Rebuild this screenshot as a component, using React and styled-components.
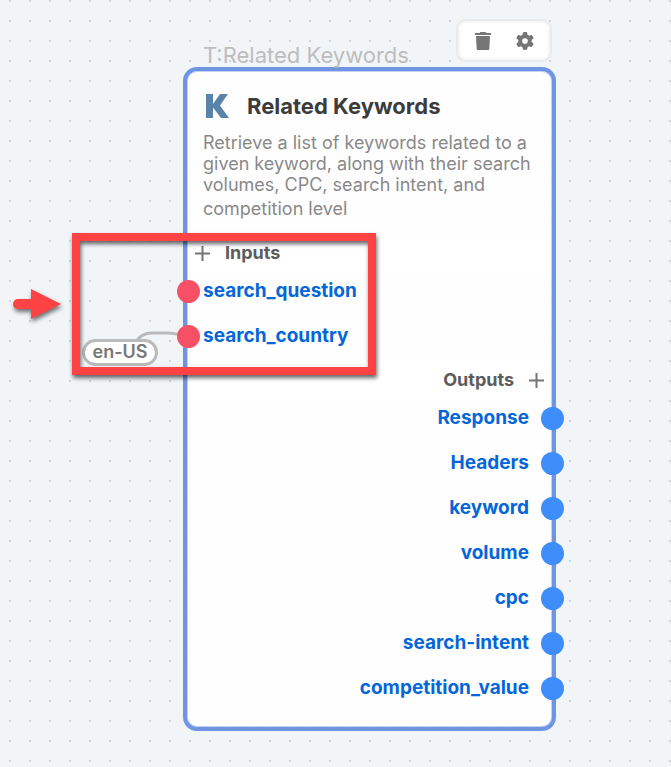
import React from 'react';
import styled, { createGlobalStyle } from 'styled-components';
import { FaGear } from 'react-icons/fa6';

const GlobalStyle = createGlobalStyle`
  *, *::before, *::after { box-sizing: border-box; }
  body { margin: 0; font-family: Inter, "Liberation Sans", sans-serif; }
  h2, h3, p, ul { margin: 0; padding: 0; }
  button { border: 0; padding: 0; background: none; cursor: pointer; font: inherit; }
`;

const Canvas = styled.main`
  position: relative;
  min-height: 100vh;
  overflow: hidden;
  background: #f1f5f8 conic-gradient(from 90deg at 18px 18px, #cbd5e0 90deg, transparent 0) -9px 2px / 20px 20px;
`;

const NodeWrap = styled.div`
  position: absolute;
  left: 183px;
  top: 19px;
  width: 373px;
`;

const NodeTop = styled.div`
  display: flex;
  height: 48px;
  padding: 0 4px 0 20px;
  justify-content: space-between;
  align-items: flex-start;
`;

const NodeTag = styled.span`
  align-self: flex-end;
  font-size: 22px;
  line-height: 24px;
  color: #bdbdbd;
  white-space: nowrap;
`;

const Toolbar = styled.div`
  display: flex;
  width: 96px;
  height: 43px;
  padding: 0 14px;
  justify-content: space-between;
  align-items: center;
  border: 2px solid #e9e9e9;
  border-radius: 10px;
  background: #fff;
  box-shadow: inset 0 0 4px #e8e8e8;
`;

const ToolButton = styled.button`
  display: grid;
  width: 22px;
  height: 24px;
  place-items: center;
  color: #757575;
`;

const Card = styled.article`
  border: 4px solid #6f94e3;
  border-radius: 14px;
  background: rgba(255, 255, 255, 0.9);
  box-shadow: inset 0 0 0 1px #c3d1f3;
  padding-bottom: 19px;
`;

const Header = styled.header`
  display: flex;
  align-items: center;
  gap: 18px;
  height: 61px;
  padding: 9px 16px 0 19px;
`;

const Title = styled.h2`
  font-size: 22px;
  font-weight: 700;
  line-height: 28px;
  color: #3c3c3c;
`;

const Description = styled.p`
  height: 102px;
  padding: 0 16px;
  font-size: 18px;
  line-height: 21px;
  color: #898989;

  &::after {
    content: "";
    display: inline-block;
    height: 20px;
  }
`;

const Section = styled.section`
  & + & {
    margin-top: 5px;
  }
`;

const SectionHeader = styled.div`
  display: flex;
  flex-direction: ${({ $side }) => ($side === 'right' ? 'row-reverse' : 'row')};
  align-items: center;
  gap: 15px;
  height: 38px;
  margin: 0 1px;
  padding: 0 7px;
  background: #fff;
`;

const SectionTitle = styled.h3`
  font-size: 18px;
  font-weight: 700;
  line-height: 22px;
  color: #5c5c5c;
`;

const AddButton = styled.button`
  display: grid;
  width: 15px;
  height: 15px;
  place-items: center;
`;

const PortList = styled.ul`
  display: grid;
  gap: 6px;
  list-style: none;
`;

const PortRow = styled.li`
  display: flex;
  flex-direction: ${({ $side }) => ($side === 'right' ? 'row-reverse' : 'row')};
  align-items: center;
  gap: ${({ $side }) => ($side === 'right' ? '12px' : '3px')};
  height: 39px;
  margin: ${({ $side }) => ($side === 'right' ? '0 -12px 0 0' : '0 0 0 -10px')};
`;

const PortDot = styled.span`
  width: 23px;
  height: 23px;
  border-radius: 50%;
  background: ${({ $side }) => ($side === 'right' ? '#3f8cfb' : '#f55066')};
`;

const PortName = styled.span`
  padding-bottom: 1px;
  font-size: 19px;
  font-weight: 700;
  line-height: 24px;
  color: #0566d9;
`;

const Wire = styled.svg`
  position: absolute;
  left: 132px;
  top: 328px;
`;

const ValuePill = styled.span`
  position: absolute;
  left: 82px;
  top: 339px;
  width: 76px;
  height: 27px;
  border: 3px solid #bababa;
  border-radius: 14px;
  background: #fff;
  font-size: 18px;
  font-weight: 600;
  line-height: 20px;
  text-align: center;
  color: #777;
`;

const Highlight = styled.div`
  position: absolute;
  left: 72px;
  top: 233px;
  width: 304px;
  height: 142px;
  border: 8px solid #ff4344;
  filter: drop-shadow(1px 3px 2px rgba(0, 0, 0, 0.6));
  pointer-events: none;
`;

const Arrow = styled.svg`
  position: absolute;
  left: 8px;
  top: 284px;
  filter: drop-shadow(1px 3px 2px rgba(0, 0, 0, 0.55));
`;

const inputs = ['search_question', 'search_country'];
const outputs = ['Response', 'Headers', 'keyword', 'volume', 'cpc', 'search-intent', 'competition_value'];

function PortSection({ title, side, ports }) {
  return (
    <Section>
      <SectionHeader $side={side}>
        <AddButton type="button" aria-label={`Add to ${title}`}>
          <svg width="15" height="15" viewBox="0 0 15 15" aria-hidden="true">
            <path d="M7.5 0v15M0 7.5h15" stroke="#757575" strokeWidth="2" />
          </svg>
        </AddButton>
        <SectionTitle>{title}</SectionTitle>
      </SectionHeader>
      <PortList>
        {ports.map((name) => (
          <PortRow key={name} $side={side}>
            <PortDot $side={side} />
            <PortName>{name}</PortName>
          </PortRow>
        ))}
      </PortList>
    </Section>
  );
}

export default function App() {
  return (
    <>
      <GlobalStyle />
      <Canvas>
        <Wire width="56" height="16" viewBox="0 0 56 16" fill="none" aria-hidden="true">
          <path d="M4 13C9 8 12 5 20 5H36C46 5 48 8 56 8" stroke="#bababa" strokeWidth="3" />
        </Wire>
        <NodeWrap>
          <NodeTop>
            <NodeTag>T:Related Keywords</NodeTag>
            <Toolbar>
              <ToolButton type="button" aria-label="Delete">
                <svg width="16" height="18" viewBox="0 0 16 18" fill="currentColor" aria-hidden="true">
                  <path d="M0 1H4.5L5.5 0H10.5L11.5 1H16V3H0ZM1 4H15L14.3 17Q14.2 18 13.2 18H2.8Q1.8 18 1.7 17Z" />
                </svg>
              </ToolButton>
              <ToolButton type="button" aria-label="Settings"><FaGear size={18} /></ToolButton>
            </Toolbar>
          </NodeTop>
          <Card>
            <Header>
              <svg width="23" height="24" viewBox="0 0 23 24" fill="#5984a8" aria-hidden="true">
                <path d="M0 0H7V10L14 0H22L14 11.5L23 24H15L7 13.5V24H0Z" />
              </svg>
              <Title>Related Keywords</Title>
            </Header>
            <Description>
              Retrieve a list of keywords related to a given keyword, along with their search volumes, CPC, search intent, and competition level
            </Description>
            <PortSection title="Inputs" side="left" ports={inputs} />
            <PortSection title="Outputs" side="right" ports={outputs} />
          </Card>
        </NodeWrap>
        <ValuePill>en-US</ValuePill>
        <Highlight />
        <Arrow width="58" height="42" viewBox="0 0 58 42" fill="#ff4344" aria-hidden="true">
          <path d="M10 15H23V5L53 20L23 35V25H10A5 5 0 0 1 10 15Z" />
        </Arrow>
      </Canvas>
    </>
  );
}
